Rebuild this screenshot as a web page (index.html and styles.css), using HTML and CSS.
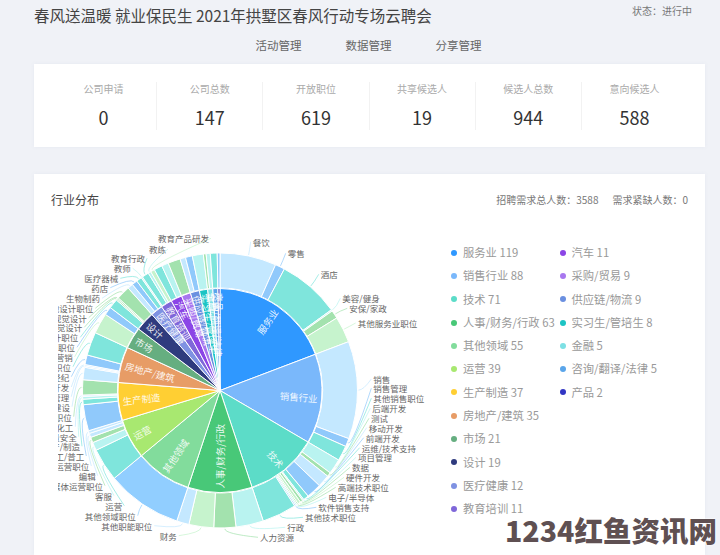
FILE: index.html
```html
<!DOCTYPE html>
<html lang="zh-CN">
<head>
    <meta charset="UTF-8">
    <meta name="viewport" content="width=device-width, initial-scale=1.0">
    <title>春风送温暖 就业保民生</title>
    <link rel="stylesheet" href="styles.css">
</head>
<body>
    <div class="page">
        <div class="top-row">
            <h1 class="page-title">春风送温暖 就业保民生 2021年拱墅区春风行动专场云聘会</h1>
            <span class="page-status">状态：进行中</span>
        </div>
        <nav class="tabs">
            <a class="tab">活动管理</a>
            <a class="tab">数据管理</a>
            <a class="tab">分享管理</a>
        </nav>

        <section class="stats card">
            <div class="stat"><p class="stat-name">公司申请</p><p class="stat-num">0</p></div>
            <div class="stat"><p class="stat-name">公司总数</p><p class="stat-num">147</p></div>
            <div class="stat"><p class="stat-name">开放职位</p><p class="stat-num">619</p></div>
            <div class="stat"><p class="stat-name">共享候选人</p><p class="stat-num">19</p></div>
            <div class="stat"><p class="stat-name">候选人总数</p><p class="stat-num">944</p></div>
            <div class="stat"><p class="stat-name">意向候选人</p><p class="stat-num">588</p></div>
        </section>

        <section class="industry card">
            <div class="industry-head">
                <h2 class="industry-title">行业分布</h2>
                <div class="industry-info">
                    <span>招聘需求总人数：3588</span>
                    <span>需求紧缺人数：0</span>
                </div>
            </div>
            <div class="industry-body">
                <svg id="chart" class="chart" viewBox="58 225 385 330" width="385" height="330"></svg>
                <ul id="legend" class="legend"></ul>
            </div>
        </section>
    </div>

    <div class="watermark">1234红鱼资讯网</div>

    <script src="script.js"></script>
</body>
</html>
```

FILE: styles.css
```css
html, body {
    margin: 0;
    height: 555px;
    overflow: hidden;
}

body {
    background: #f0f2f7;
    font-family: "Noto Sans CJK SC", "Liberation Sans", sans-serif;
    color: #333;
}

.page {
    padding: 0 15px 0 34px;
}

.card {
    background: #fff;
    box-shadow: 0 0 4px rgba(120, 130, 160, .08);
}

.top-row {
    display: flex;
    justify-content: space-between;
    height: 32px;
    padding-right: 13px;
}

.page-title {
    margin: 0;
    font-size: 15.5px;
    line-height: 30px;
    font-weight: 400;
    color: #444;
}

.page-status {
    font-size: 10px;
    line-height: 22px;
    color: #777;
}

.tabs {
    display: flex;
    justify-content: center;
    gap: 44px;
    height: 32px;
    padding-right: 2px;
}

.tab {
    font-size: 11.5px;
    line-height: 26px;
    color: #666;
}

.stats {
    display: flex;
    height: 83px;
    padding: 18px 18px 0 17px;
    box-sizing: border-box;
}

.stat {
    flex: 1;
    height: 48px;
    text-align: center;
    border-right: 1px solid #f2f2f2;
}

.stat:last-child {
    border-right: none;
}

.stat-name {
    margin: 0;
    font-size: 10px;
    line-height: 14px;
    color: #aaa;
}

.stat-num {
    margin: 8px 0 0;
    font-size: 18px;
    line-height: 26px;
    color: #333;
}

.industry {
    margin-top: 27px;
    height: 381px;
    box-sizing: border-box;
    padding: 17px 17px 0;
    overflow: hidden;
}

.industry-head {
    display: flex;
    justify-content: space-between;
    align-items: center;
    height: 17px;
}

.industry-title {
    margin: 0;
    font-size: 12px;
    font-weight: 400;
    color: #444;
}

.industry-info {
    display: flex;
    gap: 14px;
    font-size: 10px;
    color: #777;
}

.industry-body {
    display: flex;
    margin: 17px 0 0 7px;
}

.chart {
    flex: none;
    display: block;
}

.chart text {
    font-family: "Noto Sans CJK SC", "Liberation Sans", sans-serif;
}

.outer-label {
    font-size: 8.5px;
    fill: #666;
    dominant-baseline: central;
}

.inner-label {
    font-size: 9.5px;
    fill: #fff;
    fill-opacity: .9;
    dominant-baseline: central;
}

.legend {
    display: grid;
    grid-auto-flow: column;
    grid-template-rows: repeat(12, 23.3px);
    grid-auto-columns: 108.5px;
    margin: 16px 0 0 8px;
    padding: 0;
    list-style: none;
    font-size: 11.3px;
    line-height: 23.3px;
    color: #999;
    white-space: nowrap;
}

.legend-item {
    display: flex;
    align-items: center;
    gap: 6px;
}

.legend-dot {
    width: 6px;
    height: 6px;
    border-radius: 50%;
    flex: none;
}

.watermark {
    position: absolute;
    left: 505px;
    top: 510px;
    font-size: 28.5px;
    line-height: 40px;
    font-weight: 900;
    white-space: nowrap;
    color: #5f5052;
    text-shadow: 0 0 2px #fff, 0 0 2px #fff;
}
```

FILE: script.js
```js
const P = "#c4e8ff";
const B = "#90c9fb";
const T = "#7fe5dc";
const C = "#b9f3f0";
const G = "#a3e2ae";
const L = "#c6f3cd";

// name, count, colour, label x, label y (no label when x is missing)
const industries = [
    { name: "服务业", value: 119, color: "#2f98ff", kids: [
        ["餐饮", 41, P, 252.7, 241.7], ["零售", 7, B, 287.7, 253.3], ["酒店", 45, T, 320.7, 274.3],
        ["美容/健身", 1, C, 342.3, 298.3], ["安保/家政", 6, G, 349.3, 308.3], ["其他服务业职位", 19, L, 357.7, 323]
    ] },
    { name: "销售行业", value: 88, color: "#7ab8fb", kids: [
        ["销售", 71, P, 373.3, 379], ["销售管理", 6, B, 373.3, 388.3], ["其他销售职位", 11, T, 373.3, 398.3]
    ] },
    { name: "技术", value: 71, color: "#5cdcc8", kids: [
        ["后端开发", 11, C, 372.3, 408.3], ["测试", 3, G, 371, 418.3], ["移动开发", 9, P, 368.7, 427.7],
        ["前端开发", 11, B, 365.7, 437.7], ["运维/技术支持", 4, T, 361.7, 447.7], ["项目管理", 1, C, 358, 457.3],
        ["数据", 2, G, 352, 467.3], ["硬件开发", 2, L, 346, 477.3], ["高端技术职位", 1, G, 337.7, 487.3],
        ["电子/半导体", 1, C, 328.3, 497.3], ["软件销售支持", 1, B, 318.3, 507.3], ["其他技术职位", 25, T, 305, 517.3]
    ] },
    { name: "人事/财务/行政", value: 63, color: "#48c878", kids: [
        ["行政", 20, C, 287.3, 527.3], ["人力资源", 16, G, 260, 537.3], ["财务", 18, L, 176.7, 535.7], ["其他职能职位", 9, P, 152.3, 525.7]
    ] },
    { name: "其他领域", value: 55, color: "#82dc9c", kids: [
        ["其他领域职位", 55, "#91ceff", 135.7, 515.7]
    ] },
    { name: "运营", value: 39, color: "#a8e870", kids: [
        ["运营", 24, T, 122.3, 505.7], ["客服", 6, C, 112, 495.7], ["新媒体运营职位", 4, G, 103, 485.7],
        ["编辑", 3, P, 95.7, 475.7], ["其他运营职位", 2, P, 89.3, 466]
    ] },
    { name: "生产制造", value: 37, color: "#ffcf33", kids: [
        ["技工/普工", 19, B, 84.3, 456], ["生产/制造", 4, T, 80, 446.3], ["质量安全", 2, C, 76.7, 436.7],
        ["能源化工", 1, P, 73.3, 426.7], ["其他生产职位", 11, G, 71.7, 416.7]
    ] },
    { name: "房地产/建筑", value: 35, color: "#e79c66", kids: [
        ["工程建设", 9, P, 70, 406.7], ["物业管理", 1, P, 69.3, 396.7], ["房产开发", 1, P, 69.3, 387],
        ["房产经纪", 7, B, 69.3, 376.7], ["其他房产职位", 17, T, 71, 366.7]
    ] },
    { name: "市场", value: 21, color: "#66ae80", kids: [
        ["市场营销", 15, L, 72.7, 356.7], ["其他市场职位", 6, B, 75, 347.3]
    ] },
    { name: "设计", value: 19, color: "#2f3b7e", kids: [
        ["UI设计职位", 7, T, 78.3, 337.3], ["平面视觉设计", 1, G, 82.3, 327.3], ["品牌视觉设计", 1, G, 86.7, 317.7], ["其他设计职位", 10, G, 93.3, 308.3]
    ] },
    { name: "医疗健康", value: 12, color: "#7f92e2", kids: [
        ["生物制药", 4, P, 100, 298.3], ["药店", 4, B, 108.3, 287.7], ["医疗器械", 4, T, 118.3, 278.3]
    ] },
    { name: "教育培训", value: 11, color: "#7f67d9", kids: [
        ["教师", 1, C, 130.7, 268.3], ["教育行政", 5, T, 145, 258.3], ["教练", 2, C, 166, 249], ["教育产品研发", 3, L, 209, 238.3]
    ] },
    { name: "汽车", value: 11, color: "#8b45e6", kids: [["", 6, T], ["", 5, C]] },
    { name: "采购/贸易", value: 9, color: "#a877ef", kids: [["", 9, G]] },
    { name: "供应链/物流", value: 9, color: "#6a8fe0", kids: [["", 4, P], ["", 5, B]] },
    { name: "实习生/管培生", value: 8, color: "#1cc4c4", kids: [["", 8, C]] },
    { name: "金融", value: 5, color: "#7de0e4", kids: [["", 2, G], ["", 3, C]] },
    { name: "咨询/翻译/法律", value: 5, color: "#5aa5ea", kids: [["", 5, T]] },
    { name: "产品", value: 2, color: "#3236c4", kids: [["", 2, B]] }
];

const CX = 220;
const CY = 390.5;
const R_IN = 102;
const R_OUT = 137.5;
const NS = "http://www.w3.org/2000/svg";
const total = industries.reduce((sum, item) => sum + item.value, 0);
const chart = document.querySelector("#chart");

function point(r, deg) {
    const rad = deg * Math.PI / 180;
    return [CX + r * Math.sin(rad), CY - r * Math.cos(rad)];
}

function add(tag, attrs, text) {
    const el = document.createElementNS(NS, tag);
    for (const key in attrs) el.setAttribute(key, attrs[key]);
    if (text) el.textContent = text;
    chart.appendChild(el);
    return el;
}

function sector(r0, r1, a0, a1, color) {
    const big = a1 - a0 > 180 ? 1 : 0;
    const p1 = point(r1, a0);
    const p2 = point(r1, a1);
    const p3 = point(r0, a1);
    const p4 = point(r0, a0);
    let d = `M${p4[0]} ${p4[1]}L${p1[0]} ${p1[1]}A${r1} ${r1} 0 ${big} 1 ${p2[0]} ${p2[1]}`;
    d += r0 > 0 ? `L${p3[0]} ${p3[1]}A${r0} ${r0} 0 ${big} 0 ${p4[0]} ${p4[1]}Z` : "Z";
    add("path", { d: d, fill: color, stroke: "#fff", "stroke-width": 1 });
}

function leader(mid, color, x, y, name) {
    const left = x < CX;
    const from = point(R_OUT + 1, mid);
    const ctrl = point(R_OUT + 6, mid);
    const endX = left ? x + 2 : x - 2;
    add("path", {
        d: `M${from[0]} ${from[1]}Q${ctrl[0]} ${ctrl[1]} ${endX} ${y}`,
        fill: "none", stroke: color, "stroke-width": .7
    });
    add("text", { class: "outer-label", x: x, y: y, "text-anchor": left ? "end" : "start" }, name);
}

let angle = 0;
industries.forEach(item => {
    const sweep = item.value / total * 360;
    let kidAngle = angle;
    item.kids.forEach(kid => {
        const kidSweep = kid[1] / total * 360;
        sector(R_IN + .5, R_OUT, kidAngle, kidAngle + kidSweep, kid[2]);
        if (kid[0]) leader(kidAngle + kidSweep / 2, kid[2], kid[3], kid[4], kid[0]);
        kidAngle += kidSweep;
    });
    sector(0, R_IN, angle, angle + sweep, item.color);
    item.mid = angle + sweep / 2;
    angle += sweep;
});

// labels go on top of all the sectors
industries.forEach(item => {
    const pos = point(98, item.mid);
    const right = item.mid <= 180;
    const rot = right ? item.mid - 90 : item.mid - 270;
    add("text", {
        class: "inner-label",
        x: pos[0],
        y: pos[1],
        "text-anchor": right ? "end" : "start",
        transform: `rotate(${rot} ${pos[0]} ${pos[1]})`
    }, item.name);
});

const legend = document.querySelector("#legend");
industries.forEach(item => {
    const li = document.createElement("li");
    li.className = "legend-item";
    li.innerHTML = `<i class="legend-dot" style="background:${item.color}"></i><span>${item.name} ${item.value}</span>`;
    legend.appendChild(li);
});
```
